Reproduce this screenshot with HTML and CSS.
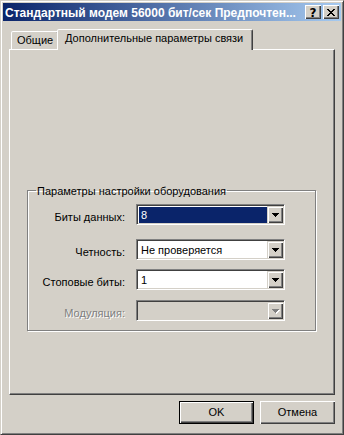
FILE: index.html
```html
<!DOCTYPE html>
<html lang="ru">
<head>
<meta charset="utf-8">
<title>Свойства модема</title>
<link rel="stylesheet" href="styles.css">
</head>
<body>
<div class="window">
  <div class="titlebar">
    <span class="title">Стандартный модем 56000 бит/сек Предпочтен...</span>
    <div class="caption-btns">
      <span class="cap-btn help">?</span>
      <span class="cap-btn close">
        <svg width="8" height="7" viewBox="0 0 8 7" shape-rendering="crispEdges" aria-hidden="true">
          <rect x="0" y="0" width="2" height="1"/><rect x="6" y="0" width="2" height="1"/>
          <rect x="1" y="1" width="2" height="1"/><rect x="5" y="1" width="2" height="1"/>
          <rect x="2" y="2" width="4" height="1"/>
          <rect x="3" y="3" width="2" height="1"/>
          <rect x="2" y="4" width="4" height="1"/>
          <rect x="1" y="5" width="2" height="1"/><rect x="5" y="5" width="2" height="1"/>
          <rect x="0" y="6" width="2" height="1"/><rect x="6" y="6" width="2" height="1"/>
        </svg>
      </span>
    </div>
  </div>
  <div class="client">
    <div class="tabs">
      <div class="tab">Общие</div>
      <div class="tab selected">Дополнительные параметры связи</div>
    </div>
    <div class="panel">
      <fieldset class="group">
        <legend>Параметры настройки оборудования</legend>
        <div class="form">
          <div class="row first">
            <label class="lbl">Биты данных:</label>
            <div class="combo">
              <span class="val selected-val">8</span>
              <span class="drop"><svg width="7" height="4" viewBox="0 0 7 4" shape-rendering="crispEdges" aria-hidden="true"><rect x="0" y="0" width="7" height="1"/><rect x="1" y="1" width="5" height="1"/><rect x="2" y="2" width="3" height="1"/><rect x="3" y="3" width="1" height="1"/></svg></span>
            </div>
          </div>
          <div class="row">
            <label class="lbl">Четность:</label>
            <div class="combo">
              <span class="val">Не проверяется</span>
              <span class="drop"><svg width="7" height="4" viewBox="0 0 7 4" shape-rendering="crispEdges" aria-hidden="true"><rect x="0" y="0" width="7" height="1"/><rect x="1" y="1" width="5" height="1"/><rect x="2" y="2" width="3" height="1"/><rect x="3" y="3" width="1" height="1"/></svg></span>
            </div>
          </div>
          <div class="row">
            <label class="lbl">Стоповые биты:</label>
            <div class="combo">
              <span class="val">1</span>
              <span class="drop"><svg width="7" height="4" viewBox="0 0 7 4" shape-rendering="crispEdges" aria-hidden="true"><rect x="0" y="0" width="7" height="1"/><rect x="1" y="1" width="5" height="1"/><rect x="2" y="2" width="3" height="1"/><rect x="3" y="3" width="1" height="1"/></svg></span>
            </div>
          </div>
          <div class="row last">
            <label class="lbl disabled">Модуляция:</label>
            <div class="combo disabled">
              <span class="val"></span>
              <span class="drop"><svg width="8" height="5" viewBox="0 0 8 5" shape-rendering="crispEdges" aria-hidden="true"><g fill="#fff"><rect x="1" y="1" width="7" height="1"/><rect x="2" y="2" width="5" height="1"/><rect x="3" y="3" width="3" height="1"/><rect x="4" y="4" width="1" height="1"/></g><g fill="#808080"><rect x="0" y="0" width="7" height="1"/><rect x="1" y="1" width="5" height="1"/><rect x="2" y="2" width="3" height="1"/><rect x="3" y="3" width="1" height="1"/></g></svg></span>
            </div>
          </div>
        </div>
      </fieldset>
    </div>
    <div class="buttons">
      <button class="btn default" type="button">OK</button>
      <button class="btn" type="button">Отмена</button>
    </div>
  </div>
</div>
</body>
</html>
```

FILE: styles.css
```css
* {
  box-sizing: border-box;
}

html,
body {
  margin: 0;
  padding: 0;
  background: #d4d0c8;
}

body {
  width: 344px;
  height: 435px;
  overflow: hidden;
  font-family: "Liberation Sans", Arial, sans-serif;
  font-size: 11px;
  color: #000;
}

.window {
  width: 344px;
  height: 435px;
  padding: 2px;
  border: 1px solid;
  border-color: #d4d0c8 #404040 #404040 #d4d0c8;
  box-shadow: inset 1px 1px #fff, inset -1px -1px #808080;
  display: flex;
  flex-direction: column;
}

/* ---------- title bar ---------- */
.titlebar {
  height: 18px;
  flex: none;
  display: flex;
  align-items: center;
  padding: 0 2px;
  background: linear-gradient(to right, #0a246a, #a6caf0);
}

.title {
  flex: 1;
  min-width: 0;
  color: #fff;
  font-weight: bold;
  font-size: 12px;
  line-height: 14px;
  padding-top: 1px;
  white-space: nowrap;
  overflow: hidden;
}

.caption-btns {
  display: flex;
  gap: 2px;
}

.cap-btn {
  width: 16px;
  height: 14px;
  display: flex;
  align-items: center;
  justify-content: center;
  background: #d4d0c8;
  box-shadow: inset 1px 1px #fff, inset -1px -1px #404040, inset -2px -2px #808080;
  color: #000;
}

.cap-btn.help {
  font-family: "DejaVu Sans", sans-serif;
  font-weight: bold;
  font-size: 12px;
  line-height: 12px;
  padding-top: 1px;
}

.cap-btn.close svg {
  fill: #000;
  margin-top: 1px;
}

/* ---------- client area ---------- */
.client {
  flex: 1;
  display: flex;
  flex-direction: column;
  padding: 8px 6px 8px 6px;
}

.tabs {
  height: 20px;
  flex: none;
  display: flex;
  align-items: flex-end;
  padding-left: 2px;
}

.tab {
  border: 1px solid;
  border-bottom: none;
  border-color: #fff #404040 transparent #fff;
  border-radius: 2px 2px 0 0;
  box-shadow: inset -1px 0 #808080;
  background: #d4d0c8;
  line-height: 13px;
  padding-top: 2px;
  white-space: nowrap;
}

.tab:first-child {
  width: 48px;
  height: 18px;
  padding-left: 5px;
}

.tab.selected {
  width: 196px;
  height: 21px;
  margin-left: -2px;
  margin-bottom: -1px;
  padding-left: 7px;
  position: relative;
  z-index: 1;
}

.panel {
  height: 346px;
  flex: none;
  border: 1px solid;
  border-color: #fff #404040 #404040 #fff;
  box-shadow: inset -1px -1px #808080;
  padding: 133px 17px 0 17px;
}

/* ---------- group box ---------- */
.group {
  margin: 0;
  width: 289px;
  min-width: 0;
  padding: 6px 0 9px 0;
  border: 1px solid #808080;
  box-shadow: 1px 1px #fff, inset 1px 1px #fff;
}

.group legend {
  margin-left: 8px;
  padding: 2px 1px 0 1px;
  line-height: 13px;
}

.form {
  display: flex;
  flex-direction: column;
  gap: 9px;
}

.row {
  display: flex;
  align-items: center;
  height: 21px;
}

.row.first {
  margin-bottom: 5px;
}

.row.last {
  margin-top: 1px;
}

.lbl {
  width: 97px;
  margin-right: 11px;
  text-align: right;
  padding-top: 5px;
  white-space: nowrap;
}

.lbl.disabled {
  color: #808080;
  text-shadow: 1px 1px #fff;
}

.combo {
  width: 149px;
  height: 21px;
  display: flex;
  padding: 1px;
  border: 1px solid;
  border-color: #808080 #fff #fff #808080;
  box-shadow: inset 1px 1px #404040, inset -1px -1px #d4d0c8;
  background: #fff;
}

.combo .val {
  flex: 1;
  margin: 1px 0 0 1px;
  padding-left: 2px;
  line-height: 16px;
  white-space: nowrap;
}

.combo .val.selected-val {
  background: #0a246a;
  color: #fff;
}

.combo.disabled {
  background: #d4d0c8;
}

.drop {
  width: 16px;
  height: 17px;
  flex: none;
  display: flex;
  align-items: center;
  justify-content: center;
  background: #d4d0c8;
  box-shadow: inset 1px 1px #d4d0c8, inset 2px 2px #fff, inset -1px -1px #404040, inset -2px -2px #808080;
}

.drop svg {
  fill: #000;
}

.combo.disabled .drop svg {
  margin: 1px 0 0 1px;
}

/* ---------- buttons ---------- */
.buttons {
  display: flex;
  justify-content: flex-end;
  gap: 6px;
  margin-top: 6px;
}

.btn {
  width: 75px;
  height: 23px;
  margin: 0;
  padding: 0;
  border: none;
  background: #d4d0c8;
  font: inherit;
  color: #000;
  line-height: 13px;
  box-shadow: inset 1px 1px #fff, inset -1px -1px #404040, inset -2px -2px #808080;
}

.btn.default {
  border: 1px solid #000;
}
```
